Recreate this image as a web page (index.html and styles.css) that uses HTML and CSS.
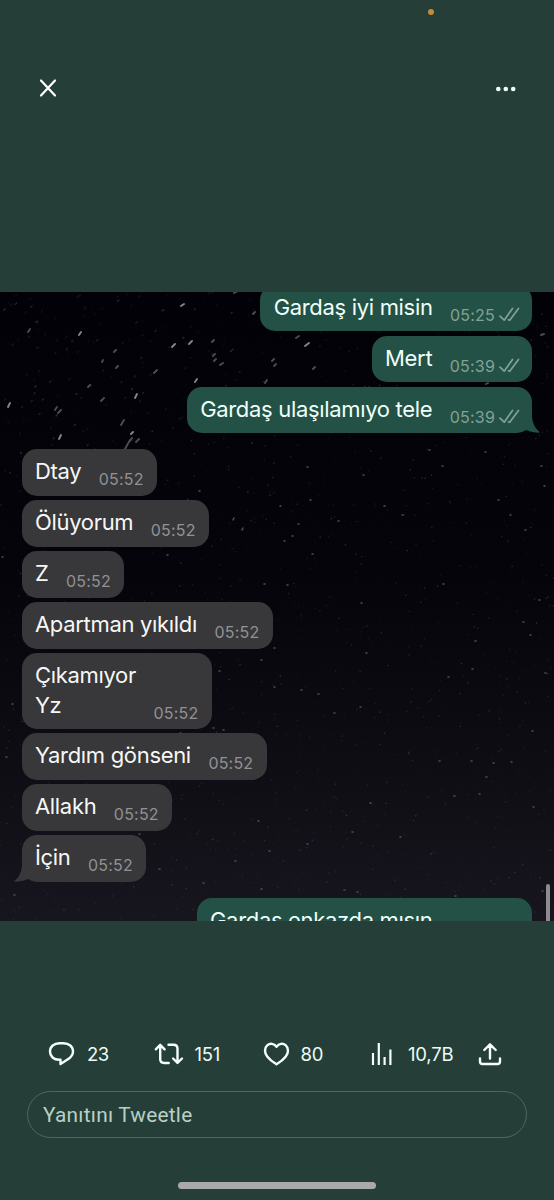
FILE: index.html
```
<!DOCTYPE html>
<html lang="tr">
<head>
<meta charset="utf-8">
<title>Tweet</title>
<link rel="stylesheet" href="styles.css">
</head>
<body>
<svg class="defs" width="0" height="0"><defs>
<g id="ticks" fill="none" stroke="currentColor" stroke-width="1.7" stroke-linecap="round" stroke-linejoin="round"><path d="M1 9.2l4.200 4L13.500 1.400M9.500 12.800l1.200.5L19.500 1.400"/></g>
</defs></svg>
<div class="screen">
  <div class="status"><span class="mic"></span></div>
  <header class="top">
    <svg class="close" width="18" height="20" viewBox="0 0 18 20"><path d="M2 2.5l14 15M16 2.5l-14 15"/></svg>
    <svg class="more" width="22" height="8" viewBox="0 0 22 8"><circle cx="3.3" cy="4" r="2.3"/><circle cx="10.8" cy="4" r="2.3"/><circle cx="18.2" cy="4" r="2.3"/></svg>
  </header>
  <main class="photo">
    <svg class="stars" width="554" height="629" viewBox="0 292 554 629"><g id="dust"></g>
      <g class="streak bright"><path d="M79 335l2-3M8 407l2-4M59 439l2-4M135 398l2-4M172 347l3-3M189 344l3-3M181 306l3-2M195 382l2-3M305 346l4-3M131 434l2-2"/></g>
      <g class="streak mid"><path d="M28 332l2-3M55 410l2-3M58 413l3-3M154 373l3-3M116 368l2-2M101 401l3-3M114 352l2-2M121 425l3-5M130 441l2-3M125 449l5-9M136 442l3-3M212 342l2-2M213 356l2-2M214 361l2-2M272 361l2-2M274 366l2-2M313 369l2-2M265 383l2-3M234 293l4-2M253 314l2-2M541 335l3-1M486 384l2-1M220 365l3-2M296 338l3-2M88 387l2-2M102 362l1-2"/></g>
      <g class="dot mid"><path d="M199 491h1M242 530l1-2M284 541h1M167 555h1M287 585h1M280 506h1M264 584h1M233 520l1-2M307 467h1M384 506h1M498 500h1M541 466h1M544 486h1M485 452h1M442 466h1M312 554h1M361 603h1M443 584h1M539 600h1M475 641h1M511 762h1M533 807h1M370 803h1M318 694h1M301 690h1M472 669h1M448 677h1M366 653h1M352 832h1M400 837h1M454 796h1M479 794h1M471 761h1M439 761h1M219 671h1M274 687h1M258 821h1M269 851h1M261 889h1M203 883h1M344 890h1M357 892h1M14 895h1M12 704h1M6 757h1M37 648h1M139 834h1M159 869h1M274 648h1M261 660h1M530 635h1M545 673h1M402 515h1M338 521h1M310 500h1M298 524h1M292 536h1M510 515h1M525 530h1M532 731h1M429 450h1M363 475h1M2 557h1M223 730h1M213 728h1M523 622h1M486 777h1M493 763h1M307 844h1M360 707h1M334 713h1M455 896h1M542 891h1M180 733h1M200 757h1M235 861h1"/></g>
    </svg>
    <section class="chat">
      <div class="msg out first"><span class="text">Gardaş iyi misin</span><span class="time">05:25</span><svg class="ticks" width="21" height="15"><use href="#ticks"/></svg></div>
      <div class="msg out"><span class="text">Mert</span><span class="time">05:39</span><svg class="ticks" width="21" height="15"><use href="#ticks"/></svg></div>
      <div class="msg out"><span class="text">Gardaş ulaşılamıyo tele</span><span class="time">05:39</span><svg class="ticks" width="21" height="15"><use href="#ticks"/></svg><svg class="tail" width="18" height="25"><path d="M0 0H10V9Q11 19 18 24.5Q10 25.5 0 20Z"/></svg></div>
      <div class="msg in turn"><span class="text">Dtay</span><span class="time">05:52</span></div>
      <div class="msg in"><span class="text">Ölüyorum</span><span class="time">05:52</span></div>
      <div class="msg in"><span class="text">Z</span><span class="time">05:52</span></div>
      <div class="msg in"><span class="text">Apartman yıkıldı</span><span class="time">05:52</span></div>
      <div class="msg in tall"><span class="text">Çıkamıyor<br>Yz</span><span class="time">05:52</span></div>
      <div class="msg in"><span class="text">Yardım gönseni</span><span class="time">05:52</span></div>
      <div class="msg in"><span class="text">Allakh</span><span class="time">05:52</span></div>
      <div class="msg in"><span class="text">İçin</span><span class="time">05:52</span><svg class="tail" width="18" height="25"><path d="M18 0H8V9Q7 19 0 24.5Q8 25.5 18 20Z"/></svg></div>
      <div class="msg out last"><span class="text">Gardaş enkazda mısın</span></div>
    </section>
    <span class="scroll"></span>
  </main>
  <nav class="actions">
    <div class="act reply"><svg width="27" height="26" viewBox="0 0 27 26"><path d="M11.5 2.2h4C21 2.200 25 5.600 25 10.500c0 4-2.500 6.200-5.500 8L12.500 23v-4.200h-1.300C5.700 18.800 2 15.400 2 10.500S6 2.200 11.500 2.200z"/></svg><span>23</span></div>
    <div class="act retweet"><svg width="30" height="24" viewBox="0 0 30 24"><path d="M1.800 7.300L6.200 2.800l4.400 4.500M6.200 3.500V17q0 4 4 4h4.500M14.500 2.800h5q4 0 4 4v13.500M19.100 16.500l4.400 4.400 4.500-4.400"/></svg><span>151</span></div>
    <div class="act like"><svg width="27" height="24" viewBox="0 0 27 24"><path d="M13.500 4.700C11 1.400 7 1 4.400 3.200 1 6.200 1.500 11 4.200 14.500c2.400 3.100 5.500 5.500 9.300 7.800 3.800-2.300 6.900-4.700 9.300-7.800 2.700-3.500 3.200-8.300-.2-11.300C20 1 16 1.400 13.500 4.700z"/></svg><span>80</span></div>
    <div class="act views"><svg width="22" height="24" viewBox="0 0 22 24"><path d="M2 11v12M7.800 1v22M13.600 15v8M19.400 7.500V23"/></svg><span>10,7B</span></div>
    <div class="act share"><svg width="24" height="24" viewBox="0 0 24 24"><path d="M12 16.500V2.500M6.300 8L12 2.300 17.700 8M2 16.500v3q0 2.500 2.500 2.500h15q2.500 0 2.500-2.500v-3"/></svg></div>
  </nav>
  <div class="answer">Yanıtını Tweetle</div>
  <span class="home"></span>
</div>
<script src="stars.js"></script>
</body>
</html>
```
FILE: styles.css
```
* { box-sizing: border-box; }
body { margin: 0; background: #253f38; font-family: Inter, "Liberation Sans", sans-serif; }
.defs { position: absolute; }
.screen { width: 554px; height: 1200px; overflow: hidden; display: flex; flex-direction: column; background: #253f38; }
.status { height: 78px; padding: 8.500px 0 0 428px; flex: none; }
.mic { display: block; width: 6px; height: 6px; border-radius: 50%; background: #c68a35; }
.top { height: 214px; flex: none; display: flex; justify-content: space-between; align-items: flex-start; padding: 0 37px 0 39px; }
.close { margin-top: .4px; fill: none; stroke: #fff; stroke-width: 2.200; stroke-linecap: round; }
.more { margin-top: 6.500px; fill: #f2fffb; }
.photo { position: relative; height: 629px; flex: none; overflow: hidden; background: linear-gradient(#020107, #05040a 45%, #0e0d14 75%, #17151d); }
.stars { position: absolute; left: 0; top: 0; }
.streak { fill: none; stroke-width: 1.900; stroke-linecap: round; }
.dot { fill: none; stroke-width: 1.6; stroke-linecap: round; }
.bright { stroke: #85858c; }
.mid { stroke: #4d4c54; }
.chat { position: relative; display: flex; flex-direction: column; gap: 4.500px; padding: 0 22px; margin-top: -7.200px; }
.msg { position: relative; height: 46.400px; flex: none; display: flex; align-items: flex-start; border-radius: 15px; padding: 8px 13.500px 0; white-space: nowrap; }
.out { align-self: flex-end; background: #235145; color: #effffa; }
.in { align-self: flex-start; background: #383739; color: #f7f7f7; padding-left: 13px; }
.turn { margin-top: 12px; }
.tall { height: 75.800px; width: 189.500px; justify-content: space-between; padding-right: 14px; }
.last { width: 335.500px; margin-top: 12px; }
.text { font-size: 22px; line-height: 29.500px; letter-spacing: -.32px; }
.time { font-size: 16px; line-height: 20px; letter-spacing: .2px; color: #929195; margin: 12px 0 0 17.500px; }
.tall .time { margin-top: 41.500px; }
.out .time { color: #83a198; }
.ticks { color: #83a198; margin: 14px 0 0 3.500px; margin-right: -1px; }
.tail { position: absolute; bottom: -.5px; }
.out .tail { right: -8px; fill: #235145; }
.in .tail { left: -8px; fill: #383739; }
.scroll { position: absolute; right: 4px; top: 592px; width: 4px; height: 50px; border-radius: 2px; background: #8c8b90; }
.actions { height: 170px; flex: none; display: grid; grid-template-columns: 106px 109px 108px 107px 1fr; padding: 119px 0 0 48px; }
.act { display: flex; align-items: center; height: 27px; font-size: 18.500px; letter-spacing: -.2px; color: #eefaf6; gap: 12px; }
.act svg { fill: none; stroke: #f5fffb; stroke-width: 2.400; stroke-linejoin: round; stroke-linecap: round; }
.reply { letter-spacing: -.6px; }
.retweet, .like { gap: 10.500px; }
.views { gap: 15px; }
.views svg { stroke-width: 2.200; stroke-linecap: butt; }
.answer { flex: none; width: 500px; height: 47px; margin-left: 27px; border: 1.500px solid #4d695f; border-radius: 24px; padding-left: 15px; font: 20.800px/47px Roboto, sans-serif; letter-spacing: .25px; color: #b8d0c6; }
.home { flex: none; width: 198px; height: 7px; border-radius: 4px; margin: 44px 0 0 178px; background: #a9a9a9; }
```
FILE: stars.js
```
// Scatter faint background stars with a repeatable generator.
let seed = 71;
const rnd = () => (seed = (seed * 16807) % 2147483647) / 2147483647;
let out = "";
for (let i = 0; i < 1500; i++) {
  const x = rnd() * 554, y = 292 + rnd() * 629;
  const slant = Math.max(0, 1 - (y - 292) / 300) * Math.max(0, 1 - x / 500) * 1.5;
  const a = (0.05 + rnd() * rnd() * 0.25).toFixed(2);
  out += `<path d="M${x.toFixed(1)} ${y.toFixed(1)}l${(0.3 + slant).toFixed(1)} ${(-0.2 - slant).toFixed(1)}" stroke="#a5a4b0" stroke-opacity="${a}" stroke-width="1.3" stroke-linecap="round"/>`;
}
document.getElementById("dust").innerHTML = out;
```
